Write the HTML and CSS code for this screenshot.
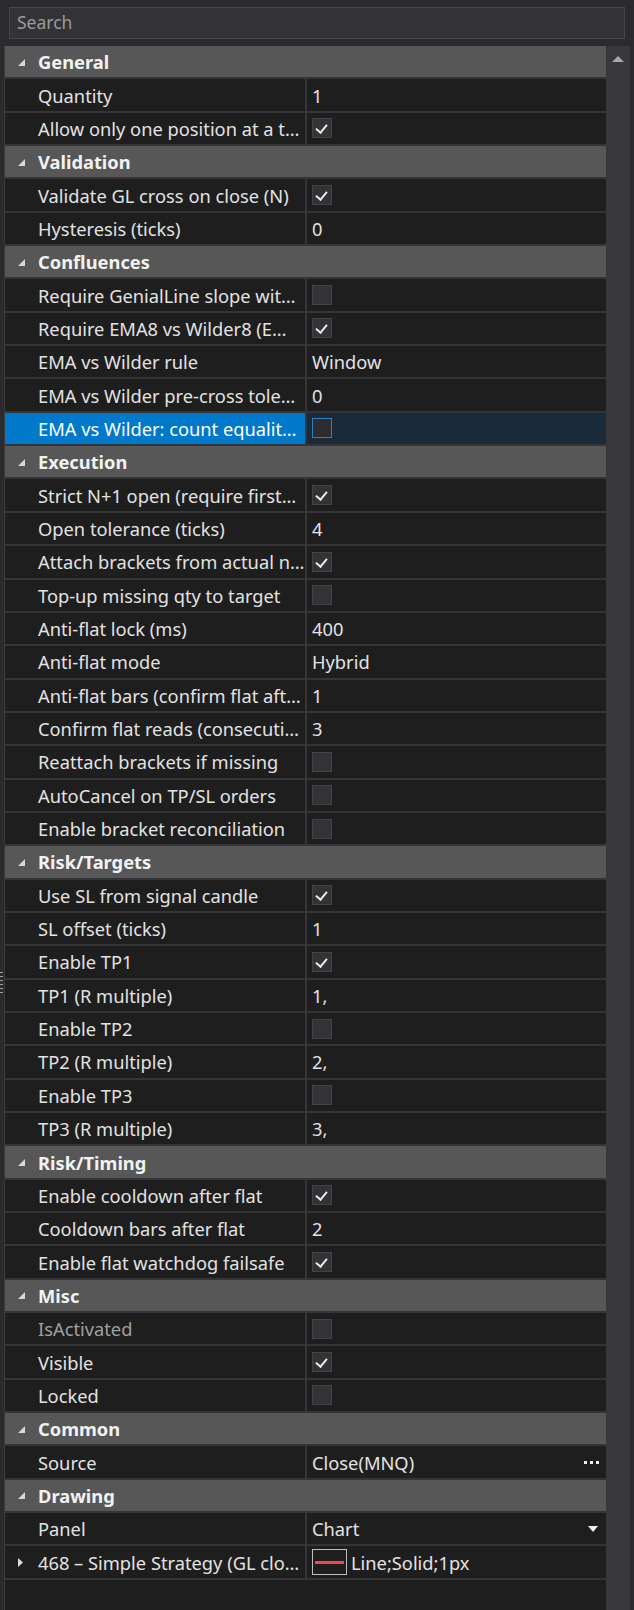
FILE: index.html
```html
<!DOCTYPE html>
<html>
<head>
<meta charset="utf-8">
<link rel="stylesheet" href="styles.css">
</head>
<body>
<div class="app">
  <div class="search-area"><div class="search">Search</div></div>
  <div class="main">
    <div class="grip"><i></i><i></i><i></i><i></i><i></i><i></i></div>
    <div class="grid">
      <div class="cat"><svg class="exp" viewBox="0 0 7 7"><polygon points="7,0 7,7 0,7"/></svg><span>General</span></div>
      <div class="row"><div class="lbl">Quantity</div><div class="val">1</div></div>
      <div class="row"><div class="lbl">Allow only one position at a t…</div><div class="val"><span class="cb on"></span></div></div>

      <div class="cat"><svg class="exp" viewBox="0 0 7 7"><polygon points="7,0 7,7 0,7"/></svg><span>Validation</span></div>
      <div class="row"><div class="lbl">Validate GL cross on close (N)</div><div class="val"><span class="cb on"></span></div></div>
      <div class="row"><div class="lbl">Hysteresis (ticks)</div><div class="val">0</div></div>

      <div class="cat"><svg class="exp" viewBox="0 0 7 7"><polygon points="7,0 7,7 0,7"/></svg><span>Confluences</span></div>
      <div class="row"><div class="lbl">Require GenialLine slope wit…</div><div class="val"><span class="cb"></span></div></div>
      <div class="row"><div class="lbl">Require EMA8 vs Wilder8 (E…</div><div class="val"><span class="cb on"></span></div></div>
      <div class="row"><div class="lbl">EMA vs Wilder rule</div><div class="val">Window</div></div>
      <div class="row"><div class="lbl">EMA vs Wilder pre-cross tole…</div><div class="val">0</div></div>
      <div class="row sel"><div class="lbl">EMA vs Wilder: count equalit…</div><div class="val"><span class="cb focus"></span></div></div>

      <div class="cat"><svg class="exp" viewBox="0 0 7 7"><polygon points="7,0 7,7 0,7"/></svg><span>Execution</span></div>
      <div class="row"><div class="lbl">Strict N+1 open (require first…</div><div class="val"><span class="cb on"></span></div></div>
      <div class="row"><div class="lbl">Open tolerance (ticks)</div><div class="val">4</div></div>
      <div class="row"><div class="lbl">Attach brackets from actual n…</div><div class="val"><span class="cb on"></span></div></div>
      <div class="row"><div class="lbl">Top-up missing qty to target</div><div class="val"><span class="cb"></span></div></div>
      <div class="row"><div class="lbl">Anti-flat lock (ms)</div><div class="val">400</div></div>
      <div class="row"><div class="lbl">Anti-flat mode</div><div class="val">Hybrid</div></div>
      <div class="row"><div class="lbl">Anti-flat bars (confirm flat aft…</div><div class="val">1</div></div>
      <div class="row"><div class="lbl">Confirm flat reads (consecuti…</div><div class="val">3</div></div>
      <div class="row"><div class="lbl">Reattach brackets if missing</div><div class="val"><span class="cb"></span></div></div>
      <div class="row"><div class="lbl">AutoCancel on TP/SL orders</div><div class="val"><span class="cb"></span></div></div>
      <div class="row"><div class="lbl">Enable bracket reconciliation</div><div class="val"><span class="cb"></span></div></div>

      <div class="cat"><svg class="exp" viewBox="0 0 7 7"><polygon points="7,0 7,7 0,7"/></svg><span>Risk/Targets</span></div>
      <div class="row"><div class="lbl">Use SL from signal candle</div><div class="val"><span class="cb on"></span></div></div>
      <div class="row"><div class="lbl">SL offset (ticks)</div><div class="val">1</div></div>
      <div class="row"><div class="lbl">Enable TP1</div><div class="val"><span class="cb on"></span></div></div>
      <div class="row"><div class="lbl">TP1 (R multiple)</div><div class="val">1,</div></div>
      <div class="row"><div class="lbl">Enable TP2</div><div class="val"><span class="cb"></span></div></div>
      <div class="row"><div class="lbl">TP2 (R multiple)</div><div class="val">2,</div></div>
      <div class="row"><div class="lbl">Enable TP3</div><div class="val"><span class="cb"></span></div></div>
      <div class="row"><div class="lbl">TP3 (R multiple)</div><div class="val">3,</div></div>

      <div class="cat"><svg class="exp" viewBox="0 0 7 7"><polygon points="7,0 7,7 0,7"/></svg><span>Risk/Timing</span></div>
      <div class="row"><div class="lbl">Enable cooldown after flat</div><div class="val"><span class="cb on"></span></div></div>
      <div class="row"><div class="lbl">Cooldown bars after flat</div><div class="val">2</div></div>
      <div class="row"><div class="lbl">Enable flat watchdog failsafe</div><div class="val"><span class="cb on"></span></div></div>

      <div class="cat"><svg class="exp" viewBox="0 0 7 7"><polygon points="7,0 7,7 0,7"/></svg><span>Misc</span></div>
      <div class="row"><div class="lbl dis">IsActivated</div><div class="val"><span class="cb"></span></div></div>
      <div class="row"><div class="lbl">Visible</div><div class="val"><span class="cb on"></span></div></div>
      <div class="row"><div class="lbl">Locked</div><div class="val"><span class="cb"></span></div></div>

      <div class="cat"><svg class="exp" viewBox="0 0 7 7"><polygon points="7,0 7,7 0,7"/></svg><span>Common</span></div>
      <div class="row"><div class="lbl">Source</div><div class="val"><span class="grow">Close(MNQ)</span><span class="dots"><i></i><i></i><i></i></span></div></div>

      <div class="cat"><svg class="exp" viewBox="0 0 7 7"><polygon points="7,0 7,7 0,7"/></svg><span>Drawing</span></div>
      <div class="row"><div class="lbl">Panel</div><div class="val"><span class="grow">Chart</span><svg class="dd" viewBox="0 0 10 6"><polygon points="0,0 10,0 5,6"/></svg></div></div>
      <div class="row"><div class="lbl"><svg class="col" viewBox="0 0 5 9"><polygon points="0,0 5,4.5 0,9"/></svg>468 – Simple Strategy (GL clo…</div><div class="val"><span class="swatch"><i></i></span><span>Line;Solid;1px</span></div></div>
    </div>
    <div class="scrollbar"><svg class="up" viewBox="0 0 12 6"><polygon points="0,6 6,0 12,6"/></svg></div>
  </div>
</div>
</body>
</html>
```

FILE: styles.css
```css
html, body {
  margin: 0;
  padding: 0;
}
body {
  width: 634px;
  height: 1610px;
  overflow: hidden;
  background: #2b2b2e;
  font-family: "Noto Sans", "Open Sans", sans-serif;
  font-size: 18.3px;
  color: #e2e2e2;
}
.app {
  display: flex;
  flex-direction: column;
  height: 1610px;
}
.search-area {
  padding: 7px 9px 7px 9px;
}
.search {
  height: 32px;
  box-sizing: border-box;
  border: 1px solid #45454a;
  background: #333337;
  color: #9a9a9a;
  padding-left: 7px;
  line-height: 29px;
  font-size: 17.5px;
}
.main {
  flex: 1;
  display: flex;
  position: relative;
}
.grip {
  width: 5px;
  display: flex;
  flex-direction: column;
  justify-content: flex-start;
  padding-top: 926px;
  gap: 3px;
  box-sizing: border-box;
  border-right: 1px solid #3a3a3e;
}
.grip i {
  display: block;
  width: 3px;
  height: 1px;
  background: #a0a0a0;
}
.grid {
  width: 601px;
  background: #1e1e1e;
  display: flex;
  flex-direction: column;
}
.cat, .row {
  height: 33.35px;
  flex: none;
  box-sizing: border-box;
  border-bottom: 2px solid #353538;
}
.cat {
  background: #575757;
  display: flex;
  align-items: center;
  font-weight: bold;
  color: #f2f2f2;
}
.exp {
  width: 7px;
  height: 7px;
  fill: #d8d8d8;
  margin-left: 13px;
  margin-right: 13px;
  margin-top: 1px;
}
.row {
  display: grid;
  grid-template-columns: 302px 1fr;
}
.lbl {
  display: flex;
  align-items: center;
  padding-left: 33px;
  border-right: 2px solid #353538;
  white-space: nowrap;
  overflow: hidden;
  text-overflow: ellipsis;
  position: relative;
}
.lbl.dis {
  color: #a0a0a0;
}
.val {
  display: flex;
  align-items: center;
  padding-left: 5px;
  padding-right: 5px;
  white-space: nowrap;
}
.grow {
  flex: 1;
}
.sel .lbl {
  background: #0079cb;
  color: #ffffff;
}
.sel .val {
  background: #1b2a39;
}
.cb {
  width: 20px;
  height: 20px;
  box-sizing: border-box;
  background: #333337;
  border: 1px solid #434347;
  position: relative;
}
.cb.on::after {
  content: "";
  position: absolute;
  left: 5px;
  top: 3px;
  width: 5px;
  height: 9px;
  border-right: 2px solid #ececec;
  border-bottom: 2px solid #ececec;
  transform: rotate(40deg);
}
.cb.focus {
  border-color: #2f7fc8;
  background: #2d2d31;
}
.dots {
  display: flex;
  gap: 3px;
  margin-right: 2px;
}
.dots i {
  display: block;
  width: 3px;
  height: 3px;
  background: #f0f0f0;
}
.dd {
  width: 10px;
  height: 6px;
  fill: #f0f0f0;
  margin-right: 3px;
}
.col {
  position: absolute;
  left: 13px;
  top: 12px;
  width: 5px;
  height: 9px;
  fill: #dcdcdc;
}
.swatch {
  width: 35px;
  height: 26px;
  box-sizing: border-box;
  border: 1px solid #bdbdbd;
  background: #1e1e1e;
  display: flex;
  align-items: center;
  padding: 0 2px;
  margin-right: 4px;
}
.swatch i {
  display: block;
  flex: 1;
  height: 3px;
  background: #f04848;
}
.scrollbar {
  width: 24px;
  background: #38383c;
  display: flex;
  justify-content: center;
  align-items: flex-start;
}
.up {
  width: 12px;
  height: 6px;
  fill: #a8a8a8;
  margin-top: 10px;
}
```
